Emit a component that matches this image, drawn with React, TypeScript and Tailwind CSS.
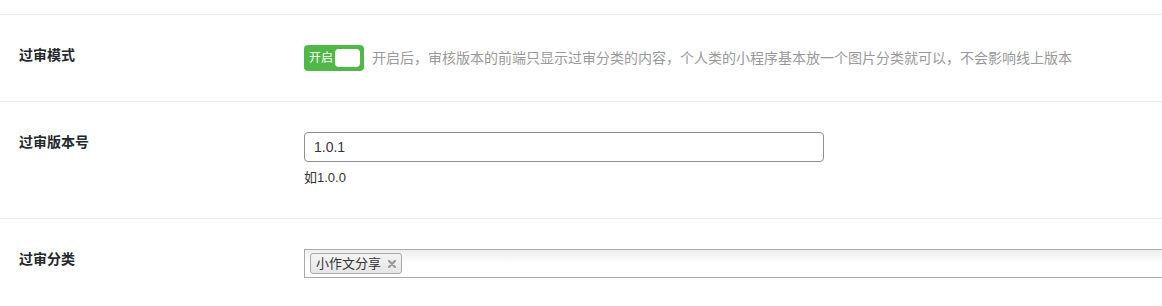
import React, { useState } from "react";

const font = { fontFamily: '"Liberation Sans", "Noto Sans CJK SC", sans-serif' };

const Row = ({ label, children }: { label: string; children: React.ReactNode }) => (
  <div className="flex border-t border-[#ebebeb] pt-[30px] pb-[30px]">
    <div className="w-[304px] shrink-0 pl-[19px] text-[14px] font-bold leading-5 text-[#23282d]">{label}</div>
    <div className="flex-1 min-w-0">{children}</div>
  </div>
);

export default function App() {
  const [on, setOn] = useState(true);
  const [version, setVersion] = useState("1.0.1");
  const [tags, setTags] = useState(["小作文分享"]);

  return (
    <div className="w-[1162px] h-[306px] overflow-hidden bg-white" style={font}>
      <div className="h-[14px]" />
      <Row label="过审模式">
        <div className="flex items-center h-[26px] gap-2">
          <button
            onClick={() => setOn(!on)}
            className={`flex items-center justify-between w-[60px] h-[26px] rounded-[4px] pl-[5px] pr-[4px] ${on ? "bg-[#4fb847]" : "bg-[#ccc]"}`}
          >
            <span className="text-[12px] text-white leading-none">开启</span>
            <span className="w-[25px] h-[18px] rounded-[4px] bg-white" />
          </button>
          <span className="text-[14px] text-[#999]">
            开启后，审核版本的前端只显示过审分类的内容，个人类的小程序基本放一个图片分类就可以，不会影响线上版本
          </span>
        </div>
      </Row>
      <Row label="过审版本号">
        <input
          value={version}
          onChange={(e) => setVersion(e.target.value)}
          className="block w-[520px] h-[30px] rounded-[4px] border border-[#8c8f94] px-[9px] text-[14px] text-[#32373c] outline-none"
        />
        <div className="mt-[6px] text-[13px] leading-5 text-[#333]">如1.0.0</div>
      </Row>
      <Row label="过审分类">
        <div className="flex items-center gap-1 w-[880px] h-[29px] border border-[#aaa] bg-gradient-to-b from-[#eee] via-white to-white pl-[5px]">
          {tags.map((t) => (
            <span
              key={t}
              className="flex items-center h-[21px] rounded-[3px] border border-[#aaa] bg-gradient-to-b from-[#f4f4f4] to-[#e6e6e6] pl-[5px] pr-[5px] text-[13px] text-[#333]"
            >
              {t}
              <button onClick={() => setTags(tags.filter((x) => x !== t))} className="ml-[7px] flex items-center">
                <svg width="8" height="8" viewBox="0 0 8 8">
                  <path d="M1 1L7 7M7 1L1 7" stroke="#999" strokeWidth="2.2" strokeLinecap="round" />
                </svg>
              </button>
            </span>
          ))}
        </div>
      </Row>
    </div>
  );
}
